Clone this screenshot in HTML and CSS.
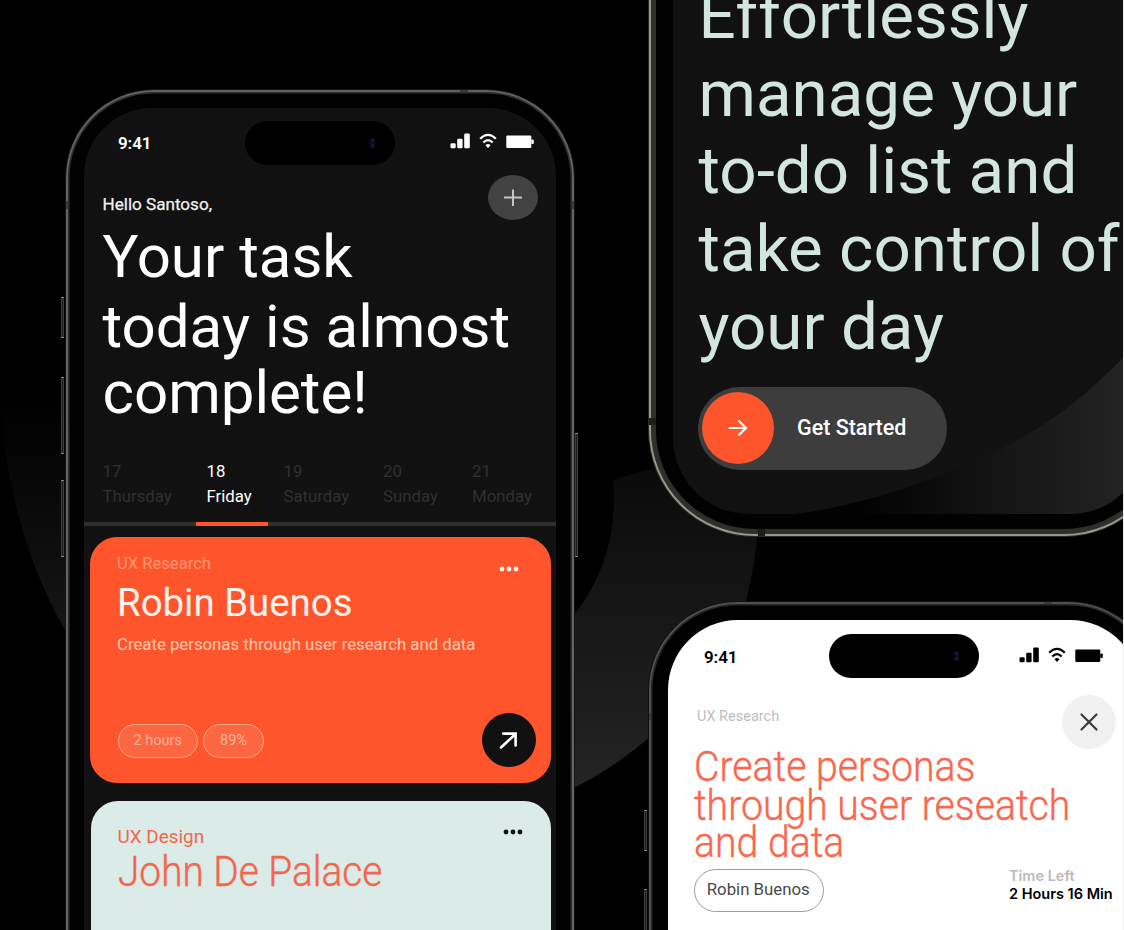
FILE: index.html
```html
<!DOCTYPE html>
<html lang="en">
<head>
<meta charset="utf-8">
<title>Task manager</title>
<link rel="stylesheet" href="styles.css">
</head>
<body>
<svg width="0" height="0" class="defs" aria-hidden="true">
  <symbol id="signal" viewBox="0 0 20 16">
    <rect x="0.5" y="10.2" width="5.2" height="5" rx="1.2"/><rect x="7.2" y="5.8" width="5.4" height="9.4" rx="1.2"/><rect x="14.2" y="0.6" width="5.600" height="14.6" rx="1.2"/>
  </symbol>
  <symbol id="wifi" viewBox="0 0 18 16">
    <path d="M1.2 5.8Q9-2 16.800 5.800" fill="none" stroke="currentColor" stroke-width="2.300"/>
    <path d="M4.300 9.500Q9 4.800 13.700 9.500" fill="none" stroke="currentColor" stroke-width="2.300"/>
    <path d="M6.500 12.200Q9 10 11.500 12.200L9 15Z"/>
  </symbol>
  <symbol id="battery" viewBox="0 0 28 14">
    <rect x="0.300" y="0.500" width="25" height="12.600" rx="1"/><rect x="25.300" y="4.600" width="2.500" height="4.400" rx="1"/>
  </symbol>
  <symbol id="dots" viewBox="0 0 20 6">
    <circle cx="3" cy="3" r="2.400"/><circle cx="10" cy="3" r="2.400"/><circle cx="17" cy="3" r="2.400"/>
  </symbol>
</svg>
<main class="scene">
  <svg class="backdrop" width="1123" height="930" viewBox="0 0 1123 930">
    <defs>
      <linearGradient id="ring" x1="0" y1="440" x2="0" y2="790" gradientUnits="userSpaceOnUse"><stop offset="0" stop-color="#080808"/><stop offset=".45" stop-color="#151515"/><stop offset="1" stop-color="#242424"/></linearGradient>
      <linearGradient id="ringLeft" x1="0" y1="400" x2="0" y2="640" gradientUnits="userSpaceOnUse"><stop offset="0" stop-color="#000"/><stop offset="1" stop-color="#161616"/></linearGradient>
    </defs>
    <path d="M0 400Q8 530 66 632V400Z" fill="url(#ringLeft)"/>
    <path d="M613 480Q635 472 665 467L758 520Q756 575 738 626Q680 735 570 790V620Q620 560 613 480Z" fill="url(#ring)"/>
  </svg>

  <section class="phone phone-home">
    <i class="key key-a"></i><i class="key key-b"></i><i class="key key-c"></i><i class="key key-power"></i>
    <i class="seam seam-left"></i><i class="seam seam-right"></i><i class="seam seam-top"></i>
    <div class="screen">
      <header class="status">
        <span class="time">9:41</span>
        <span class="island"><i class="lens"></i></span>
        <span class="indicators">
          <svg width="20" height="16"><use href="#signal"/></svg>
          <svg width="18" height="16"><use href="#wifi"/></svg>
          <svg class="battery" width="28" height="14"><use href="#battery"/></svg>
        </span>
      </header>
      <div class="greeting-row">
        <p class="greeting">Hello Santoso,</p>
        <button class="add"><svg width="20" height="18" viewBox="0 0 20 18"><path d="M10 .5V17M1 8.500H19" stroke="#c4c4c4" stroke-width="2"/></svg></button>
      </div>
      <h1 class="headline"><span class="h-a">Your task</span><span class="h-b">today is almost</span><span class="h-c">complete!</span></h1>
      <nav class="days">
        <div class="day">17<br>Thursday</div>
        <div class="day active">18<br>Friday</div>
        <div class="day">19<br>Saturday</div>
        <div class="day">20<br>Sunday</div>
        <div class="day">21<br>Monday</div>
      </nav>
      <article class="card card-orange">
        <div class="card-top">
          <p class="card-kind">UX Research</p>
          <svg class="more" width="20" height="6"><use href="#dots"/></svg>
        </div>
        <h2 class="card-name">Robin Buenos</h2>
        <p class="card-text">Create personas through user research and data</p>
        <div class="card-foot">
          <span class="pill pill-hours">2 hours</span><span class="pill pill-percent">89%</span>
          <button class="open"><svg width="22" height="22" viewBox="0 0 22 22"><path d="M3 18.500L17.500 5M5.200 4.600H17.600V16.500" fill="none" stroke="#fff" stroke-width="2.600" stroke-linecap="round" stroke-linejoin="miter"/></svg></button>
        </div>
      </article>
      <article class="card card-mint">
        <div class="card-top">
          <p class="mint-kind">UX Design</p>
          <svg class="more" width="20" height="6"><use href="#dots"/></svg>
        </div>
        <h2 class="mint-name">John De Palace</h2>
      </article>
    </div>
  </section>

  <div class="column">
    <section class="phone phone-intro">
      <i class="seam seam-left"></i><i class="seam seam-bottom"></i>
      <div class="screen">
        <svg class="swoosh" width="472" height="180" viewBox="0 0 472 180">
          <defs><linearGradient id="sw" x1="190" x2="450" y1="0" y2="0" gradientUnits="userSpaceOnUse"><stop offset="0" stop-color="#020202"/><stop offset=".5" stop-color="#141414"/><stop offset="1" stop-color="#232323"/></linearGradient></defs>
          <path d="M120 180Q152 177 207 162Q300 133 350 103Q410 70 472 0V180Z" fill="url(#sw)"/>
        </svg>
        <h1 class="slogan">Effortlessly<br>manage your<br>to-do list and<br>take control of<br>your day</h1>
        <button class="start"><span class="knob"><svg width="20" height="18" viewBox="0 0 20 18"><path d="M1.500 9H17.500M11 2L18 9L11 16" fill="none" stroke="#fff" stroke-width="2.200" stroke-linecap="round"/></svg></span><span class="start-label">Get Started</span></button>
      </div>
    </section>

    <section class="phone phone-detail">
      <i class="key key-a"></i><i class="key key-b"></i>
      <i class="seam seam-left"></i><i class="seam seam-top"></i>
      <div class="screen">
        <header class="status">
          <span class="time">9:41</span>
          <span class="island"><i class="lens"></i></span>
          <span class="indicators">
            <svg width="20" height="16"><use href="#signal"/></svg>
            <svg width="18" height="16"><use href="#wifi"/></svg>
            <svg class="battery" width="28" height="14"><use href="#battery"/></svg>
          </span>
        </header>
        <div class="detail-top">
          <p class="detail-kind">UX Research</p>
          <button class="close"><svg width="20" height="20" viewBox="0 0 20 20"><path d="M2.500 2.500L17.500 17.500M17.500 2.500L2.500 17.500" stroke="#3c3c3c" stroke-width="2.200" stroke-linecap="round"/></svg></button>
        </div>
        <h1 class="detail-title"><span class="t-a">Create personas</span><span class="t-b">through user reseatch</span><span class="t-c">and data</span></h1>
        <div class="detail-meta">
          <span class="owner">Robin Buenos</span>
          <p class="left"><span class="left-label">Time Left</span><span class="left-value">2 Hours 16 Min</span></p>
        </div>
      </div>
    </section>
  </div>
</main>
</body>
</html>
```
FILE: styles.css
```css
* { box-sizing: border-box; }
body { margin: 0; background: #efefef; font-family: Roboto, "Liberation Sans", sans-serif; overflow: hidden; }
h1, h2, p { margin: 0; font-weight: 400; }
button { border: 0; padding: 0; margin: 0; font: inherit; display: flex; align-items: center; justify-content: center; }
svg { display: block; fill: currentColor; flex: none; }
.defs { position: absolute; }

.scene { position: relative; display: flex; align-items: flex-start; width: 1123px; height: 930px; padding-left: 66px; overflow: hidden; background: #000; }
.backdrop { position: absolute; left: 0; top: 0; }

.phone { position: relative; flex: none; background: #010102; }
.phone-home { width: 508px; height: 960px; margin-top: 90px; padding: 16px 16px 0; border: 2px solid #626166; border-bottom: 0; border-radius: 88px 88px 0 0; box-shadow: inset 0 0 0 1.500px #2f2f33, 0 0 0 1px #151517; }
.screen { position: relative; overflow: hidden; background: #111; }
.phone-home .screen { width: 472px; height: 940px; border-radius: 68px 68px 0 0; color: #fff; }

.key { position: absolute; left: -7px; width: 3px; background: #1c1c1e; border: 1px solid #3e3e41; border-top-color: #aaa; border-bottom-color: #aaa; }
.phone-home .key-a { top: 205px; height: 41px; }
.phone-home .key-b { top: 285px; height: 77px; }
.phone-home .key-c { top: 388px; height: 77px; }
.phone-home .key-power { left: auto; right: -6px; top: 341px; height: 124px; }
.seam { position: absolute; background: #3a3a3e; }
.phone-home .seam-left { left: -2px; top: 109px; width: 2px; height: 8px; }
.phone-home .seam-right { right: -2px; top: 109px; width: 2px; height: 8px; }
.phone-home .seam-top { left: 392px; top: -2px; width: 8px; height: 2px; }

.status { display: flex; align-items: center; padding-top: 13px; }
.time { width: 161px; padding-left: 34px; font-size: 17px; line-height: 20px; font-weight: 600; letter-spacing: -.1px; }
.island { display: flex; align-items: center; justify-content: flex-end; width: 150px; height: 44px; padding-right: 17px; border-radius: 22px; background: #000; }
.lens { width: 11px; height: 14px; border-radius: 50%; background: radial-gradient(circle at 50% 30%, #1c1c48 0 1px, transparent 2px), radial-gradient(circle at 50% 70%, #1c1c48 0 1px, transparent 2px), radial-gradient(#0b0b2a, #000 75%); }
.indicators { display: flex; align-items: center; gap: 9px; margin: -4px 0 0 55px; }
.battery { margin-top: 2px; }

.greeting-row { display: flex; justify-content: space-between; align-items: flex-start; height: 45px; margin-top: 10px; padding: 0 18px 0 18.500px; }
.greeting { margin-top: 19px; font-size: 17.100px; line-height: 20px; color: #f2f2f2; -webkit-text-stroke: .25px currentColor; }
.add { width: 50px; height: 45px; border-radius: 50%; background: #424242; }
.headline { margin-top: 2px; padding-left: 18.500px; font-size: 60px; }
.headline span { display: block; white-space: nowrap; }
.h-a, .h-b { line-height: 70px; }
.h-c { line-height: 61px; }

.days { display: grid; grid-template-columns: 104px 77px 99.500px 89px 84px; height: 67px; margin-top: 36px; padding-left: 18.500px; border-bottom: 4px solid #2f2f2f; font-size: 16.800px; line-height: 25px; color: #303030; }
.day { position: relative; }
.active { color: #fff; }
.active::after { content: ""; position: absolute; left: -10.500px; bottom: -4px; width: 72px; height: 4px; background: #ff5630; }

.card { margin-left: 6px; width: 461px; border-radius: 27px; }
.card-top { display: flex; justify-content: space-between; }
.card-orange { height: 245.500px; margin-top: 11px; padding: 17px 15px 0 27px; background: #ff552d; }
.card-orange .more { margin: 12px 17px 0 0; color: #fff4ee; }
.card-kind { font-size: 16.600px; line-height: 20px; color: #ff9673; }
.card-name { margin-top: 9px; font-size: 38.400px; line-height: 40px; color: #fff3ec; }
.card-text { margin-top: 11px; font-size: 16.750px; line-height: 20px; color: #ffc9ae; }
.card-foot { display: flex; align-items: center; height: 54px; margin-top: 59px; padding-left: .5px; }
.pill { display: flex; align-items: center; justify-content: center; height: 34px; margin-top: 1px; border: 1px solid #ffa987; border-radius: 17px; background: #fc6641; color: #ffb397; font-size: 14.500px; line-height: 17px; }
.pill-hours { width: 80.500px; margin-right: 5px; }
.pill-percent { width: 61px; }
.open { width: 54px; height: 54px; margin-left: auto; border-radius: 50%; background: #111; }

.card-mint { height: 240px; margin: 18px 0 0 7px; width: 460px; padding: 25px 28.500px 0 26.500px; background: #daebe8; color: #f5654b; }
.card-mint .more { margin-top: 3px; color: #111; }
.mint-kind { font-size: 18.900px; line-height: 22px; }
.mint-name { margin-top: 2px; font-size: 42px; line-height: 44px; font-weight: 300; white-space: nowrap; transform: scaleX(.924); transform-origin: 0 0; -webkit-text-stroke: .4px currentColor; }

.column { display: flex; flex-direction: column; margin-left: 75px; }
.phone-intro { width: 521px; height: 556px; margin-top: -20px; padding: 20px 22px 20px; border: 0 solid #98968f; border-width: 0 2px 2px; border-radius: 0 0 106px 106px; box-shadow: inset 0 0 0 5px #302e2b, 0 0 0 1px #2a2926; }
.phone-intro .screen { width: 473px; height: 514px; padding-left: 25.500px; border-radius: 0 0 76px 76px; }
.swoosh { position: absolute; left: 0; bottom: 0; }
.phone-intro .seam { background: #1c1b1a; }
.phone-intro .seam-left { left: -2px; top: 438px; width: 7px; height: 7px; }
.phone-intro .seam-bottom { left: 107px; bottom: -2px; width: 7px; height: 7px; }
.slogan { position: relative; margin-top: -23px; font-size: 65.500px; line-height: 77.700px; color: #d3e5e1; white-space: nowrap; }
.start { position: relative; justify-content: flex-start; width: 248.500px; height: 83px; margin: 21px 0 0 -.5px; padding-left: 4px; border-radius: 42px; background: #3d3d3d; color: #fff; }
.knob { display: flex; align-items: center; justify-content: center; width: 72px; height: 72px; border-radius: 50%; background: #ff552d; }
.start-label { margin-left: 23px; padding-bottom: 1px; font-size: 21.500px; line-height: 26px; font-weight: 500; }

.phone-detail { width: 508px; height: 420px; margin-top: 66px; padding: 16px 17px 0; border: 2px solid #505054; border-bottom: 0; border-radius: 88px 88px 0 0; box-shadow: inset 0 0 0 1.500px #28282b, 0 0 0 1px #111; }
.phone-detail .screen { width: 472px; height: 400px; border-radius: 70px 70px 0 0; background: #fff; color: #000; }
.phone-detail .status { padding-top: 14px; }
.phone-detail .time { padding: 2px 0 0 36px; }
.phone-detail .indicators { margin: -2px 0 0 40px; }
.phone-detail .key-a { top: 206px; height: 41px; }
.phone-detail .key-b { top: 285px; height: 77px; }
.phone-detail .seam-left { left: -2px; top: 109px; width: 2px; height: 7px; }
.phone-detail .seam-top { left: 393px; top: -2px; width: 8px; height: 2px; }
.detail-top { display: flex; justify-content: space-between; align-items: flex-start; height: 53px; margin-top: 17px; padding: 0 24px 0 29px; }
.detail-kind { margin-top: 13px; font-size: 14.500px; line-height: 18px; color: #bdbdbd; }
.close { width: 54px; height: 54px; border-radius: 50%; background: #f1f1f1; }
.detail-title { margin-top: 1px; padding-left: 25.500px; font-size: 42px; font-weight: 300; color: #f9674d; }
.detail-title span { display: block; white-space: nowrap; transform: scaleX(.933); transform-origin: 0 0; -webkit-text-stroke: .4px currentColor; }
.t-a { line-height: 35px; }
.t-b { line-height: 44px; }
.t-c { line-height: 29px; }
.detail-meta { display: flex; align-items: flex-start; margin-top: 11.500px; padding-left: 25.500px; }
.owner { display: flex; align-items: center; justify-content: center; width: 130.500px; height: 43px; padding: 0 1px 2px 0; border: 1px solid #9c9c9c; border-radius: 22px; font-size: 16.800px; color: #484848; }
.left { margin: -2px 0 0 185px; font-family: Inter, "Liberation Sans", sans-serif; font-size: 14.500px; line-height: 18px; font-weight: 600; white-space: nowrap; }
.left span { display: block; }
.left-label { color: #bababa; }
```
